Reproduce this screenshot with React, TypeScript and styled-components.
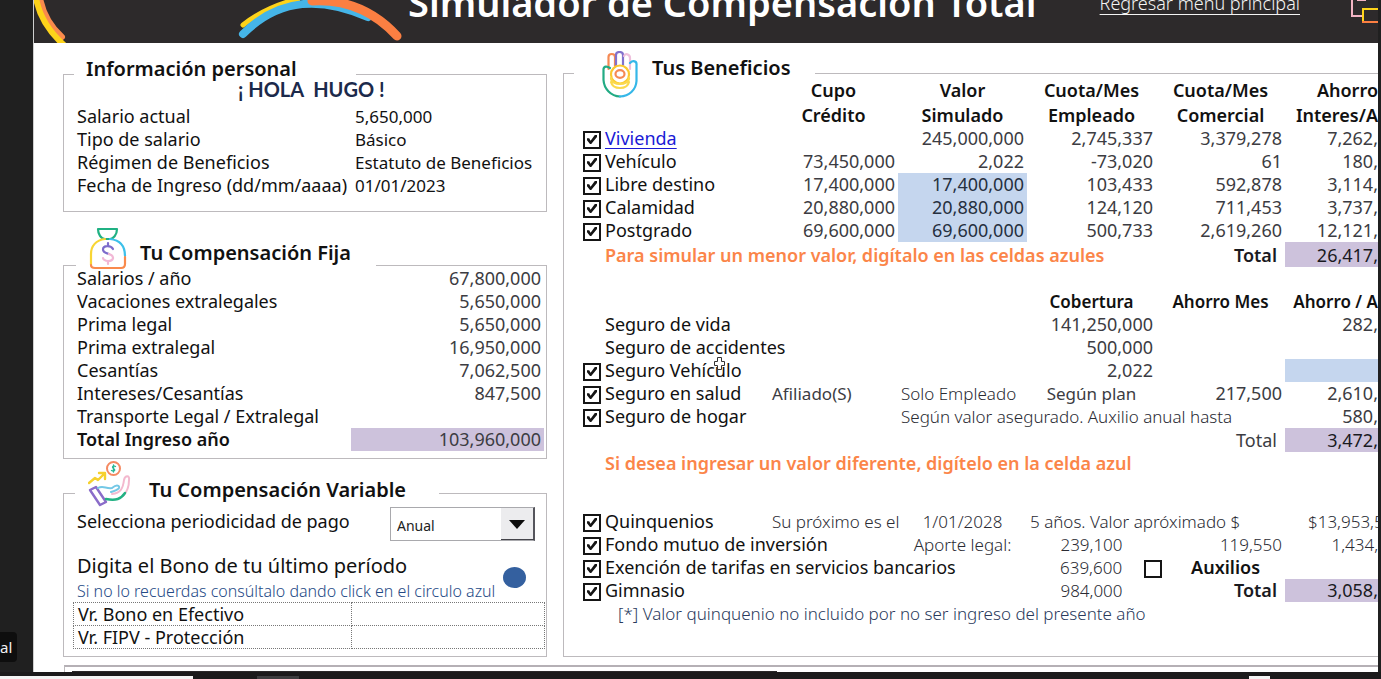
import React, { ReactNode } from "react";
import styled, { createGlobalStyle, css } from "styled-components";

const ink = "#111111";
const soft = "#3c3c42";
const lightInk = "#2a2b33";
const navy = "#2a3a5c";
const line = "#bdbabd";
const blue = "#c5d6ee";
const purple = "#cdc2dc";
const orange = "#fb8549";

const Global = createGlobalStyle`
  * { box-sizing: border-box; }
  body {
    margin: 0;
    background: #202020;
    color: ${ink};
    font-family: "Noto Sans", "Liberation Sans", sans-serif;
    font-size: 17px;
    overflow-x: hidden;
  }
  h1, h2, p { margin: 0; }
`;

const Screen = styled.div`
  display: flex;
  flex-direction: column;
  min-height: 100vh;
`;

const Stage = styled.div`
  display: grid;
  grid-template-columns: 33px minmax(0, 1fr) 3px;
  flex: 1;
`;

const Rail = styled.aside`
  display: flex;
  align-items: flex-end;
  padding-bottom: 10px;
`;

const NameTag = styled.span`
  background: #0e0e0e;
  color: #f2f2f2;
  font-size: 15px;
  line-height: 30px;
  width: 17px;
  border-radius: 0 4px 4px 0;
`;

const Sheet = styled.main`
  background: #fff;
  display: flex;
  flex-direction: column;
  border-left: 1px solid #cfcfcf;
  overflow: hidden;
`;

const Banner = styled.header`
  background: #2d2a2b;
  color: #fff;
  height: 43px;
  display: flex;
  align-items: flex-end;
  overflow: hidden;
`;

const BannerArt = styled.svg<{ $indent?: number }>`
  flex: none;
  margin-left: ${(p) => p.$indent ?? 0}px;
`;

const Title = styled.h1`
  font-size: 38px;
  font-weight: 600;
  line-height: 44px;
  margin-left: 4px;
  padding-bottom: 19px;
  white-space: nowrap;
`;

const BackLink = styled.a`
  color: #f4f4f4;
  font-weight: 300;
  font-size: 18px;
  line-height: 24px;
  margin-left: auto;
  margin-right: 50px;
  padding-bottom: 28px;
  text-underline-offset: 4px;
  text-decoration-thickness: 1px;
  white-space: nowrap;
`;

const Body = styled.div`
  display: grid;
  grid-template-columns: 484px minmax(0, 1fr);
  column-gap: 16px;
  padding: 8px 0 8px 29px;
`;

const Side = styled.div`
  display: flex;
  flex-direction: column;
`;

const Panel = styled.section<{ $top: number; $end?: number }>`
  border: 1px solid ${line};
  margin-top: ${(p) => p.$top}px;
  padding-bottom: ${(p) => p.$end ?? 0}px;
`;

const BenefitsPanel = styled(Panel)`
  border-right: 0;
  padding-left: 19px;
  min-width: 0;
`;

type HeadProps = {
  $rise: number;
  $width: number;
  $indent: number;
  $gap: number;
  $pad: number;
  $drop?: number;
  $icon?: "flex-start" | "flex-end";
};
const PanelHead = styled.div<HeadProps>`
  display: flex;
  align-items: center;
  background: #fff;
  height: 34px;
  width: ${(p) => p.$width}px;
  margin-top: -${(p) => p.$rise}px;
  margin-left: ${(p) => p.$indent}px;
  margin-bottom: -${(p) => p.$drop ?? 0}px;
  padding-left: ${(p) => p.$pad}px;
  gap: ${(p) => p.$gap}px;
  svg { flex: none; align-self: ${(p) => p.$icon ?? "center"}; }
`;

const Heading = styled.h2`
  font-size: 20px;
  font-weight: 600;
  line-height: 28px;
  white-space: nowrap;
`;

const Greeting = styled.p`
  font-family: Lato, "Noto Sans", sans-serif;
  font-weight: 700;
  font-size: 20px;
  line-height: 24px;
  color: #1c2a4b;
  padding: 0 0 4px 174px;
`;

const Grid = styled.table`
  border-collapse: collapse;
  table-layout: fixed;
  width: 100%;
  td, th { padding: 0; font-weight: 400; text-align: left; white-space: nowrap; }
`;

const FactRow = styled.tr`
  height: 23px;
  line-height: 23px;
  th { font-size: 18px; padding-left: 13px; }
  td { font-size: 17px; }
`;

const PayRow = styled.tr<{ $strong?: boolean }>`
  height: 23px;
  line-height: 23px;
  font-size: 18px;
  th { padding-left: 13px; font-weight: ${(p) => (p.$strong ? 600 : 400)}; }
  td { text-align: right; padding-right: 3px; color: ${soft}; background: ${(p) => (p.$strong ? purple : "none")}; }
`;

const Inset = styled.div<{ $right?: number }>`
  margin-right: ${(p) => p.$right ?? 0}px;
`;

const SelectRow = styled.div`
  display: flex;
  justify-content: space-between;
  padding: 0 11px 0 13px;
  label { font-size: 18px; line-height: 28px; }
`;

const SelectBox = styled.div`
  position: relative;
  width: 145px;
  height: 34px;
  svg { position: absolute; right: 1px; top: 1px; pointer-events: none; }
`;

const Select = styled.select`
  appearance: none;
  width: 100%;
  height: 100%;
  border: 1px solid #a9a9ad;
  border-right: 2px solid #55555c;
  border-radius: 0;
  background: #fff;
  padding: 3px 6px 0;
  color: #222;
  font: 400 14px "Noto Sans", sans-serif;
`;

const BonusIntro = styled.div`
  position: relative;
  padding: 11px 0 0 13px;
`;

const BonusTitle = styled.p`
  font-size: 20px;
  line-height: 28px;
`;

const BonusHint = styled.p`
  font-size: 16px;
  font-weight: 300;
  line-height: 22px;
  color: #254a86;
`;

const BlueDot = styled.button`
  position: absolute;
  right: 20px;
  top: 26px;
  width: 23px;
  height: 21px;
  border: 0;
  padding: 0;
  border-radius: 50%;
  background: #34609f;
`;

const BonusTable = styled(Grid)`
  width: 472px;
  margin-left: 9px;
  td, th { border: 1px dotted #777; height: 23px; line-height: 22px; }
  th { padding-left: 4px; font-size: 18px; }
`;

const CellInput = styled.input<{ $fill?: string }>`
  display: block;
  width: 100%;
  height: 23px;
  border: 0;
  padding: 0 3px;
  background: ${(p) => p.$fill ?? "transparent"};
  text-align: right;
  font: inherit;
  color: #26303f;
`;

const BonusInput = styled(CellInput)`
  height: 22px;
`;

const Benefits = styled(Grid)`
  font-size: 18px;
`;

type RowProps = { $h?: number };
const Row = styled.tr<RowProps>`
  height: ${(p) => p.$h ?? 23}px;
  line-height: ${(p) => Math.min(p.$h ?? 23, 24)}px;
`;

type CellProps = {
  $align?: "left" | "center";
  $light?: boolean;
  $small?: boolean;
  $bold?: boolean;
  $fill?: string;
  $pad?: number;
};
const Cell = styled.td<CellProps>`
  && {
    text-align: ${(p) => p.$align ?? "right"};
    color: ${(p) => (p.$bold || p.$fill ? "#1a1a1f" : p.$light ? lightInk : soft)};
    background: ${(p) => p.$fill ?? "none"};
    font-weight: ${(p) => (p.$bold ? 600 : p.$light ? 300 : 400)};
    font-size: ${(p) => (p.$small || p.$light ? 17 : 18)}px;
    padding: ${(p) => (p.$align === "center" ? "0" : `0 ${p.$align ? 0 : p.$pad ?? 3}px 0 ${p.$align ? p.$pad ?? 3 : 0}px`)};
  }
`;

const ColHead = styled.th<{ $right?: boolean }>`
  && {
    text-align: ${(p) => (p.$right ? "right" : "center")};
    font-weight: 600;
    font-size: 18px;
  }
`;

const SmallHead = styled(ColHead)`
  && { font-size: 17px; }
`;

const TickCell = styled.td`
  vertical-align: middle;
`;

const Tick = styled.input`
  appearance: none;
  display: block;
  width: 18px;
  height: 18px;
  margin: 2px 0 0;
  border: 2px solid #151515;
  background: #fff;
  &:checked::before {
    content: "";
    display: block;
    width: 10px;
    height: 10px;
    margin: 2px;
    background: #151515;
    clip-path: polygon(0 38%, 22% 38%, 36% 62%, 78% 4%, 100% 4%, 100% 26%, 42% 96%, 30% 96%, 0 58%);
  }
`;

const Name = styled.th`
  position: relative;
  a { color: #1a1ad6; text-underline-offset: 3px; text-decoration-thickness: 1px; }
  svg { position: absolute; left: 108px; top: -3px; }
`;

const Note = styled.td<{ $tone: "orange" | "navy" }>`
  ${(p) =>
    p.$tone === "orange"
      ? css`&& { color: ${orange}; font-weight: 600; font-size: 18px; }`
      : css`&& { color: ${navy}; font-weight: 300; font-size: 17px; padding-left: 13px; }`}
`;

const Aux = styled.div`
  display: flex;
  align-items: center;
  padding-left: 33px;
  strong { font-weight: 600; font-size: 18px; color: ${ink}; margin-left: 29px; }
  input { margin-left: 22px; }
`;

const NextPanel = styled.div`
  flex: 1;
  margin-left: 30px;
  border-top: 2px solid #b5b0b5;
  border-left: 1px solid ${line};
  padding: 4px 0 0 7px;
  &::before {
    content: "";
    display: block;
    width: 54%;
    height: 1px;
    background: #2a2829;
  }
`;

const Taskbar = styled.footer`
  height: 7px;
  background: #1b1a1b;
  display: flex;
  align-items: flex-end;
`;

const TaskPiece = styled.span<{ $w: number; $c: string; $gap?: number }>`
  width: ${(p) => p.$w}px;
  height: 3px;
  margin-left: ${(p) => p.$gap ?? 0}px;
  background: ${(p) => p.$c};
`;

const LeftArcs = () => (
  <BannerArt width="40" height="43" viewBox="0 0 40 43" fill="none">
    <path d="M6 -2C9 14 17 27 28 37" stroke="#f98a4c" strokeWidth="6" strokeLinecap="round" />
    <path d="M2 -2C5 15 15 32 31 46" stroke="#fdd31a" strokeWidth="6" />
  </BannerArt>
);

const Arch = () => (
  <BannerArt $indent={164} width="166" height="43" viewBox="0 0 166 43" fill="none" strokeLinecap="round">
    <path d="M5 25C20 13 36 5 60 -1" stroke="#fdd31a" strokeWidth="5" />
    <path d="M5 34C42 -3 84 -3 130 17" stroke="#45b5e8" strokeWidth="8" />
    <path d="M74 1C108 -1 136 11 159 36" stroke="#fb7f42" strokeWidth="9" />
  </BannerArt>
);

const MenuIcon = () => (
  <BannerArt width="28" height="43" viewBox="0 0 28 43" fill="none">
    <path d="M2 -4V16H12M8 -2V0H16" stroke="#f3b4c4" strokeWidth="2" />
    <path d="M28 9H13V21" stroke="#fdd31a" strokeWidth="2" />
    <path d="M12 22H28" stroke="#fb7f42" strokeWidth="2" />
  </BannerArt>
);

const MoneyBag = () => (
  <svg width="38" height="43" viewBox="0 0 38 43" fill="none" strokeWidth="2.2" strokeLinecap="round" strokeLinejoin="round">
    <path d="M9 2H28C28 8 24 12 21 12H16C12 12 9 7 9 2Z" stroke="#20b183" />
    <path d="M16 12C7 13 2 19 2 27V38" stroke="#f8d534" />
    <path d="M21 12C31 13 36 19 36 29" stroke="#3cc0ea" />
    <path d="M2 38Q2 41 6 41H32Q36 41 36 37V30" stroke="#f98a4c" />
    <path d="M19 16V19M24 22C22 18 14 18 14 22.500C14 26 18 26 20 27" stroke="#7d6ccb" />
    <path d="M20 27C26 29 25 34 19 34C16 34 14 32 14 31M19 34V37" stroke="#f2b8d6" />
  </svg>
);

const GivingHand = () => (
  <svg width="43" height="46" viewBox="0 0 43 46" fill="none" strokeWidth="2" strokeLinecap="round" strokeLinejoin="round">
    <circle cx="25.500" cy="7.500" r="6.500" stroke="#f58a62" />
    <path d="M27.500 5.500C25 4 23.500 6 25.500 7.500C28 9 26 11 23.500 9.500M25.500 4V11" stroke="#2bb894" strokeWidth="1.400" />
    <path d="M1 22L7 17L10 19L16 13M11 12H17V18" stroke="#f6d12e" strokeWidth="2.400" />
    <path d="M2 29L8 26L18 41L12 44Z" stroke="#8a6cc9" strokeWidth="2.400" />
    <path d="M10 27C15 24 18 28 24 27C30 22 33 26 30 28C28 30 25 30 23 31" stroke="#74c8e6" />
    <path d="M24 33C33 32 35 27 36 19C37 14 42 14 41 19C41 28 38 32 35 35" stroke="#f3b9ce" />
    <path d="M18 38C28 40 33 38 37 32" stroke="#22b183" strokeWidth="2.400" />
  </svg>
);

const HandIcon = () => (
  <svg width="36" height="47" viewBox="0 0 36 47" fill="none" strokeWidth="2.200" strokeLinecap="round" strokeLinejoin="round">
    <path d="M6.500 18V6C6.500 2 13 2 13 6V15" stroke="#f58a54" />
    <path d="M14 14V4C14 0 21 0 21 4V14" stroke="#8272cc" />
    <path d="M22 5C23 2 28 3 28 7V18" stroke="#eebfdc" />
    <path d="M8 17C5 15 2 15 1.500 18V29C2 38 9 45 18 45.500" stroke="#22ab84" />
    <path d="M28 12C31 9 35 10 34.500 14V30C34 39 27 45 18 45.500" stroke="#35b7e8" />
    <circle cx="18" cy="23.500" r="9" stroke="#fbc92f" />
    <path d="M9 27C9 35 27 35 27 27M9 31C11 39 25 39 27 31" stroke="#fbd94c" />
    <ellipse cx="18" cy="23" rx="4.500" ry="3.800" stroke="#f58a54" />
  </svg>
);

const CrossCursor = () => (
  <svg width="13" height="15" viewBox="0 0 13 15" fill="#fff" stroke="#333" strokeWidth="1">
    <path d="M4.500 1.500H8.500V5.500H11.500V9.500H8.500V13.500H4.500V9.500H1.500V5.500H4.500Z" />
  </svg>
);

const facts: [string, string][] = [
  ["Salario actual", "5,650,000"],
  ["Tipo de salario", "Básico"],
  ["Régimen de Beneficios", "Estatuto de Beneficios"],
  ["Fecha de Ingreso (dd/mm/aaaa)", "01/01/2023"],
];

const pay: [string, string][] = [
  ["Salarios / año", "67,800,000"],
  ["Vacaciones extralegales", "5,650,000"],
  ["Prima legal", "5,650,000"],
  ["Prima extralegal", "16,950,000"],
  ["Cesantías", "7,062,500"],
  ["Intereses/Cesantías", "847,500"],
  ["Transporte Legal / Extralegal", ""],
  ["Total Ingreso año", "103,960,000"],
];

const credits = [
  { id: "vivienda", name: "Vivienda", cupo: "", valor: "245,000,000", emp: "2,745,337", com: "3,379,278", save: "7,262," },
  { id: "vehiculo", name: "Vehículo", cupo: "73,450,000", valor: "2,022", emp: "-73,020", com: "61", save: "180," },
  { id: "libre", name: "Libre destino", cupo: "17,400,000", valor: "17,400,000", emp: "103,433", com: "592,878", save: "3,114,", edit: true },
  { id: "calamidad", name: "Calamidad", cupo: "20,880,000", valor: "20,880,000", emp: "124,120", com: "711,453", save: "3,737,", edit: true },
  { id: "postgrado", name: "Postgrado", cupo: "69,600,000", valor: "69,600,000", emp: "500,733", com: "2,619,260", save: "12,121,", edit: true },
];

function BenefitRow({ id, name, tick = true, children }: { id: string; name: ReactNode; tick?: boolean; children: ReactNode }) {
  return (
    <Row>
      <TickCell>{tick && <Tick type="checkbox" id={id} aria-labelledby={`${id}-name`} defaultChecked />}</TickCell>
      <Name id={`${id}-name`}>{name}</Name>
      {children}
    </Row>
  );
}

export default function App() {
  return (
    <Screen>
      <Global />
      <Stage>
        <Rail><NameTag>al</NameTag></Rail>
        <Sheet>
          <Banner>
            <LeftArcs />
            <Arch />
            <Title>Simulador de Compensación Total</Title>
            <BackLink href="#menu">Regresar menú principal</BackLink>
            <MenuIcon />
          </Banner>

          <Body>
            <Side>
              <Panel $top={23} $end={14}>
                <PanelHead $rise={23} $width={282} $indent={10} $pad={12} $gap={0} $drop={9}>
                  <Heading>Información personal</Heading>
                </PanelHead>
                <Greeting>¡ HOLA&nbsp; HUGO !</Greeting>
                <Inset>
                  <Grid>
                    <colgroup><col style={{ width: 291 }} /><col /></colgroup>
                    <tbody>
                      {facts.map(([k, v]) => (
                        <FactRow key={k}><th scope="row">{k}</th><td>{v}</td></FactRow>
                      ))}
                    </tbody>
                  </Grid>
                </Inset>
              </Panel>

              <Panel $top={53} $end={7}>
                <PanelHead $rise={30} $width={300} $indent={12} $pad={13} $gap={13} $drop={3} $icon="flex-end">
                  <MoneyBag />
                  <Heading>Tu Compensación Fija</Heading>
                </PanelHead>
                <Inset $right={2}>
                  <Grid>
                    <colgroup><col style={{ width: 287 }} /><col /></colgroup>
                    <tbody>
                      {pay.map(([k, v], i) => (
                        <PayRow key={k} $strong={i === pay.length - 1}><th scope="row">{k}</th><td>{v}</td></PayRow>
                      ))}
                    </tbody>
                  </Grid>
                </Inset>
              </Panel>

              <Panel $top={34} $end={7}>
                <PanelHead $rise={21} $width={364} $indent={11} $pad={13} $gap={18} $drop={0} $icon="flex-end">
                  <GivingHand />
                  <Heading>Tu Compensación Variable</Heading>
                </PanelHead>
                <SelectRow>
                  <label htmlFor="periodo">Selecciona periodicidad de pago</label>
                  <SelectBox>
                    <Select id="periodo" defaultValue="Anual"><option>Anual</option></Select>
                    <svg width="33" height="32" viewBox="0 0 33 32">
                      <path d="M0 0H32V32H0Z" fill="#ececee" />
                      <path d="M0 31.500H33" stroke="#44444a" />
                      <path d="M8 12H24L16 21Z" fill="#0c0c0c" />
                    </svg>
                  </SelectBox>
                </SelectRow>
                <BonusIntro>
                  <BonusTitle id="bono">Digita el Bono de tu último período</BonusTitle>
                  <BonusHint>Si no lo recuerdas consúltalo dando click en el circulo azul</BonusHint>
                  <BlueDot type="button" aria-labelledby="bono" />
                </BonusIntro>
                <BonusTable>
                  <colgroup><col style={{ width: 278 }} /><col /></colgroup>
                  <tbody>
                    <tr><th scope="row" id="efectivo">Vr. Bono en Efectivo</th><td><BonusInput aria-labelledby="efectivo" /></td></tr>
                    <tr><th scope="row" id="fipv">Vr. FIPV - Protección</th><td><BonusInput aria-labelledby="fipv" /></td></tr>
                  </tbody>
                </BonusTable>
              </Panel>
            </Side>

            <BenefitsPanel $top={22}>
              <PanelHead $rise={23} $width={241} $indent={-9} $pad={28} $gap={14} $drop={8} $icon="flex-start">
                <HandIcon />
                <Heading>Tus Beneficios</Heading>
              </PanelHead>
              <Benefits>
                <colgroup>
                  <col style={{ width: 22 }} />
                  <col style={{ width: 164 }} />
                  <col style={{ width: 129 }} />
                  <col style={{ width: 129 }} />
                  <col style={{ width: 129 }} />
                  <col style={{ width: 129 }} />
                  <col />
                </colgroup>
                <thead>
                  <Row $h={25}>
                    <td colSpan={2} />
                    <ColHead>Cupo</ColHead><ColHead>Valor</ColHead><ColHead>Cuota/Mes</ColHead><ColHead>Cuota/Mes</ColHead><ColHead $right>Ahorro</ColHead>
                  </Row>
                  <Row $h={25}>
                    <td colSpan={2} />
                    <ColHead>Crédito</ColHead><ColHead>Simulado</ColHead><ColHead>Empleado</ColHead><ColHead>Comercial</ColHead><ColHead $right>Interes/A</ColHead>
                  </Row>
                </thead>
                <tbody>
                  {credits.map((c) => (
                    <BenefitRow key={c.id} id={c.id} name={c.id === "vivienda" ? <a href="#vivienda">{c.name}</a> : c.name}>
                      <Cell>{c.cupo}</Cell>
                      {c.edit ? (
                        <Cell $fill={blue} $pad={0}><CellInput aria-labelledby={`${c.id}-name`} defaultValue={c.valor} /></Cell>
                      ) : (
                        <Cell>{c.valor}</Cell>
                      )}
                      <Cell>{c.emp}</Cell>
                      <Cell>{c.com}</Cell>
                      <Cell $pad={0}>{c.save}</Cell>
                    </BenefitRow>
                  ))}
                  <Row $h={25}>
                    <td />
                    <Note $tone="orange" colSpan={4}>Para simular un menor valor, digítalo en las celdas azules</Note>
                    <Cell $bold $pad={8}>Total</Cell>
                    <Cell $fill={purple} $pad={0}>26,417,</Cell>
                  </Row>
                  <Row $h={24}><td colSpan={7} /></Row>
                  <Row $h={22}>
                    <td colSpan={4} />
                    <SmallHead>Cobertura</SmallHead><SmallHead>Ahorro Mes</SmallHead><SmallHead $right>Ahorro / A</SmallHead>
                  </Row>
                  <BenefitRow id="vida" tick={false} name="Seguro de vida">
                    <td /><td /><Cell>141,250,000</Cell><td /><Cell $pad={0}>282,</Cell>
                  </BenefitRow>
                  <BenefitRow id="accidentes" tick={false} name="Seguro de accidentes">
                    <td /><td /><Cell>500,000</Cell><td /><td />
                  </BenefitRow>
                  <BenefitRow id="seguro-vehiculo" name={<>Seguro Vehículo<CrossCursor /></>}>
                    <td /><td /><Cell>2,022</Cell><td />
                    <Cell $fill={blue} $pad={0}><CellInput aria-labelledby="seguro-vehiculo-name" /></Cell>
                  </BenefitRow>
                  <BenefitRow id="salud" name="Seguro en salud">
                    <Cell $align="left" $small>Afiliado(S)</Cell>
                    <Cell $align="left" $light>Solo Empleado</Cell>
                    <Cell $align="center" $small>Según plan</Cell>
                    <Cell>217,500</Cell><Cell $pad={0}>2,610,</Cell>
                  </BenefitRow>
                  <BenefitRow id="hogar" name="Seguro de hogar">
                    <td /><Cell $align="left" $light colSpan={3}>Según valor asegurado. Auxilio anual hasta</Cell><Cell $pad={0}>580,</Cell>
                  </BenefitRow>
                  <Row $h={24}>
                    <td colSpan={5} /><Cell $pad={8}>Total</Cell><Cell $fill={purple} $pad={0}>3,472,</Cell>
                  </Row>
                  <Row>
                    <td /><Note $tone="orange" colSpan={6}>Si desea ingresar un valor diferente, digítelo en la celda azul</Note>
                  </Row>
                  <Row $h={35}><td colSpan={7} /></Row>
                  <BenefitRow id="quinquenios" name="Quinquenios">
                    <Cell $align="left" $light>Su próximo es el</Cell>
                    <Cell $align="center" $light>1/01/2028</Cell>
                    <Cell $align="left" $light colSpan={2}>5 años. Valor apróximado $</Cell>
                    <Cell $align="left" $light $pad={23}>$13,953,5</Cell>
                  </BenefitRow>
                  <Row>
                    <TickCell><Tick type="checkbox" id="fondo" aria-labelledby="fondo-name" defaultChecked /></TickCell>
                    <Name id="fondo-name" colSpan={2}>Fondo mutuo de inversión</Name>
                    <Cell $align="center" $light>Aporte legal:</Cell>
                    <Cell $align="center" $light>239,100</Cell>
                    <Cell $light>119,550</Cell>
                    <Cell $light $pad={0}>1,434,</Cell>
                  </Row>
                  <Row>
                    <TickCell><Tick type="checkbox" id="tarifas" aria-labelledby="tarifas-name" defaultChecked /></TickCell>
                    <Name id="tarifas-name" colSpan={3}>Exención de tarifas en servicios bancarios</Name>
                    <Cell $align="left" $light $pad={0} colSpan={2}>
                      <Aux>639,600<Tick type="checkbox" id="auxilios" aria-labelledby="auxilios-name" /><strong id="auxilios-name">Auxilios</strong></Aux>
                    </Cell>
                    <td />
                  </Row>
                  <BenefitRow id="gimnasio" name="Gimnasio">
                    <td /><td /><Cell $align="center" $light>984,000</Cell><Cell $bold $pad={8}>Total</Cell><Cell $fill={purple} $pad={0}>3,058,</Cell>
                  </BenefitRow>
                  <Row>
                    <td /><Note $tone="navy" colSpan={6}>[*] Valor quinquenio no incluido por no ser ingreso del presente año</Note>
                  </Row>
                </tbody>
              </Benefits>
            </BenefitsPanel>
          </Body>
          <NextPanel />
        </Sheet>
      </Stage>
      <Taskbar>
        <TaskPiece $w={193} $c="#f4f4f4" />
        <TaskPiece $w={42} $c="#3d3d3f" $gap={64} />
        <TaskPiece $w={21} $c="#f4f4f4" $gap={950} />
      </Taskbar>
    </Screen>
  );
}
